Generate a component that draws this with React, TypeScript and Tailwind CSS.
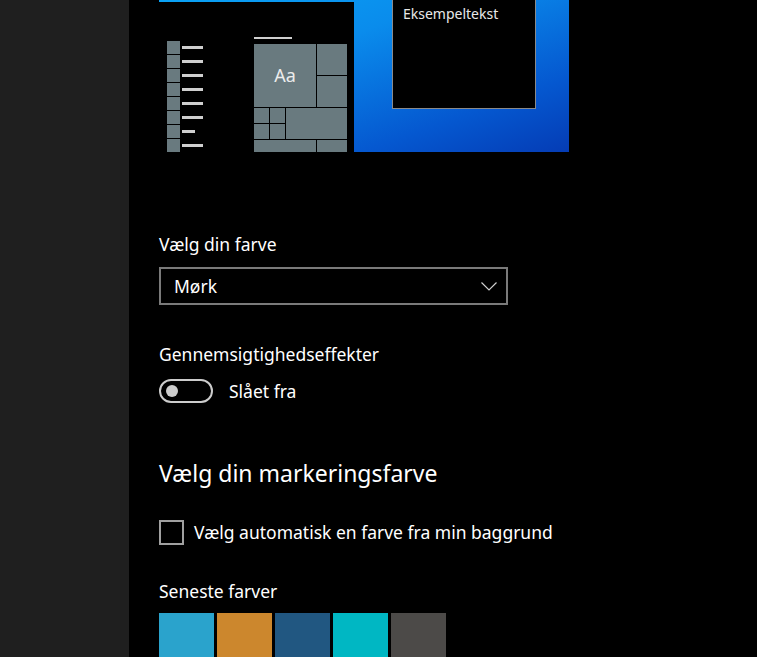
import React from 'react';

const FONT = "font-['Noto_Sans','Open_Sans',sans-serif]";

const ListPreview: React.FC = () => (
    <div className="flex flex-col w-[38px]">
        <div className="h-[3px] w-[38px] bg-[#cfcfcf] mb-[4px]" />
        <div className="flex flex-col gap-px">
            {[21, 21, 21, 21, 21, 21, 13, 21].map((w, i) => (
                <div key={i} className="flex items-center h-[13px] shrink-0">
                    <div className="w-[13px] h-[13px] bg-[#697a7f]" />
                    <div className="h-[3px] ml-[2px] bg-[#cfcfcf]" style={{ width: w }} />
                </div>
            ))}
        </div>
    </div>
);

const TilesPreview: React.FC = () => (
    <div className="flex flex-col w-[93px]">
        <div className="h-[3px] w-[38px] bg-[#cfcfcf] mb-[5px]" />
        <div className="grid grid-cols-[15px_15px_30px_30px] grid-rows-[31px_31px_15px_15px_12px] gap-px">
            <div className="col-span-3 row-span-2 bg-[#697a7f] flex items-center justify-center text-[18px] text-[#ececec]">Aa</div>
            <div className="bg-[#697a7f]" />
            <div className="bg-[#697a7f]" />
            <div className="bg-[#697a7f]" />
            <div className="bg-[#697a7f]" />
            <div className="col-span-2 row-span-2 bg-[#697a7f]" />
            <div className="bg-[#697a7f]" />
            <div className="bg-[#697a7f]" />
            <div className="col-span-3 bg-[#697a7f]" />
            <div className="bg-[#697a7f]" />
        </div>
    </div>
);

const Preview: React.FC = () => (
    <div className="flex shrink-0 w-[410px] h-[152px] bg-[linear-gradient(160deg,#0aa2f5_0%,#0a8cec_35%,#0558d0_75%,#053cb5_100%)] overflow-hidden">
        <div className="mt-[2px] w-[195px] h-[150px] bg-black flex pt-[35px] pl-[8px] gap-[49px] overflow-hidden">
            <ListPreview />
            <TilesPreview />
        </div>
        <div className="ml-[38px] w-[144px] h-[109px] bg-black border border-[#8a8a8a] border-t-0 pl-[10px] pt-[3px] text-[14px] text-[#e8e8e8]">
            Eksempeltekst
        </div>
    </div>
);

export default function App() {
    const swatches = ['#2aa3cc', '#cc872d', '#215781', '#00b7c3', '#4c4a48'];
    return (
        <div className={`flex w-[757px] h-[657px] overflow-hidden bg-black text-white ${FONT}`}>
            {/* Sidebar */}
            <div className="w-[129px] shrink-0 bg-[#1f1f1f]" />

            {/* Content */}
            <div className="flex flex-col pl-[30px] [&>*]:shrink-0">
                <Preview />

                <div className="mt-[81px] text-[17.5px] leading-[22px]">Vælg din farve</div>
                <div className="mt-[12px] w-[349px] h-[38px] border-2 border-[#7a7a7a] flex items-center justify-between pl-[13px] pr-[9px] text-[17.5px]">
                    <span>Mørk</span>
                    <svg width="16" height="9" viewBox="0 0 16 9" fill="none">
                        <path d="M0.5 0.5 L8 8 L15.5 0.5" stroke="#cfcfcf" strokeWidth="1.2" />
                    </svg>
                </div>

                <div className="mt-[38px] text-[17.5px] leading-[22px]">Gennemsigtighedseffekter</div>
                <div className="mt-[14px] flex items-center gap-[16px]">
                    <div className="w-[54px] h-[24px] rounded-full border-2 border-[#cccccc] flex items-center pl-[5px]">
                        <div className="w-[12px] h-[12px] rounded-full bg-[#cccccc]" />
                    </div>
                    <span className="text-[17.5px] leading-[22px]">Slået fra</span>
                </div>

                <div className="mt-[54px] text-[23px] leading-[32px]">Vælg din markeringsfarve</div>

                <div className="mt-[31px] flex items-center gap-[10px]">
                    <div className="w-[25px] h-[25px] border-2 border-[#a0a0a0]" />
                    <span className="text-[17.5px] leading-[22px] -mt-[2px]">Vælg automatisk en farve fra min baggrund</span>
                </div>

                <div className="mt-[35px] text-[17.5px] leading-[22px]">Seneste farver</div>
                <div className="mt-[11px] flex gap-[3px]">
                    {swatches.map(c => (
                        <div key={c} className="w-[55px] h-[55px]" style={{ backgroundColor: c }} />
                    ))}
                </div>
            </div>
        </div>
    );
}
